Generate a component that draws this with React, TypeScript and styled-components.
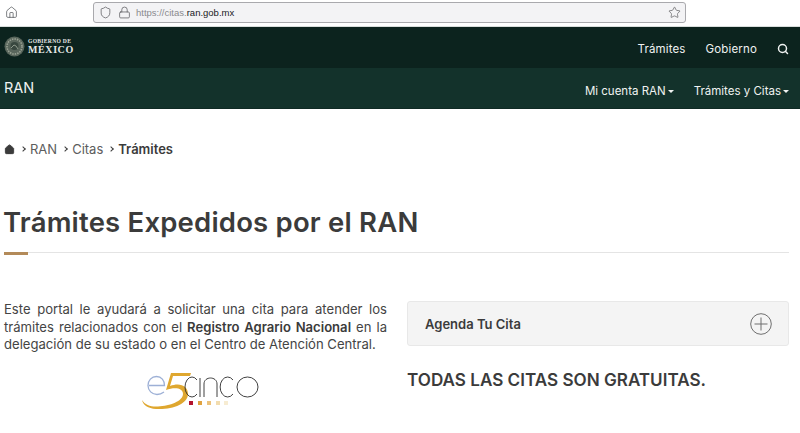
import React from "react";
import styled, { createGlobalStyle } from "styled-components";
import { Home, Search, Shield, Lock, Star } from "lucide-react";

const GlobalStyle = createGlobalStyle`
  html, body {
    margin: 0;
    padding: 0;
    background: #fff;
    overflow: hidden;
  }
  * { box-sizing: border-box; }
  body {
    font-family: Inter, "Open Sans", "Liberation Sans", sans-serif;
    color: #3b3b3b;
  }
`;

const Page = styled.div`
  width: 800px;
  height: 433px;
  overflow: hidden;
`;

const BrowserBar = styled.div`
  height: 27px;
  display: flex;
  align-items: flex-start;
  padding: 2px 0 0 5px;
  background: #fff;
  border-bottom: 1px solid #d9dedc;
`;

const BrowserHome = styled.div`
  width: 88px;
  height: 21px;
  display: flex;
  align-items: center;
  color: #55585c;
`;

const AddressBar = styled.div`
  width: 593px;
  height: 21px;
  display: flex;
  align-items: center;
  padding: 0 4px 0 5px;
  background: #f3f3f5;
  border: 1px solid #a9a9ad;
  border-radius: 3px;
  color: #5c5c60;
`;

const Url = styled.span`
  margin-left: 5px;
  font-family: "Liberation Sans", sans-serif;
  font-size: 9.5px;
  color: #8a8a8e;
  flex: 1;
  b {
    font-weight: 400;
    color: #202024;
  }
`;

const LockWrap = styled.span`
  display: flex;
  margin-left: 6px;
`;

const TopNav = styled.nav`
  height: 41px;
  display: flex;
  align-items: center;
  justify-content: space-between;
  padding: 2px 11px 0 4px;
  background: #0c231e;
`;

const SubNav = styled.nav`
  height: 41px;
  display: flex;
  align-items: center;
  justify-content: space-between;
  padding: 0 11px 0 4px;
  background: #13322b;
  border-bottom: 1px solid #0f2a24;
`;

const Logo = styled.div`
  display: flex;
  align-items: center;
  gap: 3px;
  margin-top: -4px;
`;

const LogoText = styled.div`
  display: flex;
  flex-direction: column;
  font-family: "Liberation Serif", serif;
  font-weight: 700;
  color: #e6e8e6;
  small {
    font-size: 5.6px;
    line-height: 7px;
    letter-spacing: 0.3px;
  }
  strong {
    font-size: 10px;
    line-height: 10px;
    letter-spacing: 0.6px;
  }
`;

const TopLinks = styled.div`
  display: flex;
  align-items: center;
  gap: 20px;
  color: #f0f2f1;
  font-size: 11.5px;
  letter-spacing: 0.15px;
`;

const SubLinks = styled.div`
  display: flex;
  align-items: center;
  gap: 20px;
  margin-top: 5px;
  color: #f0f2f1;
  font-size: 11.5px;
`;

const Caret = styled.span`
  display: inline-block;
  margin-left: 2px;
  vertical-align: 2px;
  border-top: 3px solid #f0f2f1;
  border-left: 3px solid transparent;
  border-right: 3px solid transparent;
`;

const Brand = styled.span`
  color: #f0f2f1;
  font-size: 14.5px;
  margin-top: -1px;
`;

const Content = styled.main`
  padding: 32px 11px 0 4px;
`;

const Crumbs = styled.div`
  height: 16px;
  display: flex;
  align-items: center;
  font-size: 13px;
  color: #5d5d5d;
`;

const Crumb = styled.span<{ $current?: boolean }>`
  display: flex;
  margin-right: 6px;
  font-weight: ${(p) => (p.$current ? 600 : 400)};
  color: ${(p) => (p.$current ? "#3b3b3b" : "#5d5d5d")};
`;

const Chevron = styled.span`
  width: 4px;
  height: 4px;
  margin-right: 5px;
  border-top: 1.3px solid #3b3b3b;
  border-right: 1.3px solid #3b3b3b;
  transform: rotate(45deg);
`;

const Title = styled.h1`
  margin: 48px 0 0 -1px;
  font-size: 27.5px;
  line-height: 34px;
  font-weight: 600;
  letter-spacing: 0.2px;
  color: #3b3b3b;
`;

const Rule = styled.div`
  position: relative;
  margin-top: 13px;
  height: 1px;
  background: #e4e4e4;
  &::before {
    content: "";
    position: absolute;
    left: 0;
    top: 0;
    width: 24px;
    height: 3px;
    background: #b38a59;
  }
`;

const Columns = styled.div`
  display: grid;
  grid-template-columns: 383px 382px;
  gap: 20px;
  margin-top: 47px;
`;

const Intro = styled.p`
  margin: 0;
  padding-top: 1px;
  font-size: 13.1px;
  line-height: 17.5px;
  text-align: justify;
  color: #444;
  b {
    font-weight: 600;
    color: #3b3b3b;
  }
`;

const LogoRow = styled.div`
  display: flex;
  margin: 18px 0 0 138px;
`;

const Accordion = styled.div`
  height: 45px;
  margin-top: 1px;
  display: flex;
  align-items: center;
  justify-content: space-between;
  padding: 0 16px 0 17px;
  background: #f4f4f4;
  border: 1px solid #e8e8e8;
  border-radius: 3px;
  font-size: 13px;
  font-weight: 600;
  color: #3b3b3b;
`;

const Notice = styled.h2`
  margin: 24px 0 0;
  font-size: 17.1px;
  line-height: 20px;
  font-weight: 600;
  color: #3b3b3b;
`;

const Seal = () => (
  <svg width="21" height="21" viewBox="0 0 21 21">
    <circle cx="10.5" cy="10.5" r="10" fill="#59665c" />
    <circle cx="10.5" cy="10.5" r="7.5" fill="none" stroke="#99a294" strokeWidth="1.6" strokeDasharray="1.5 1" />
    <circle cx="10.5" cy="10" r="4" fill="#38473f" />
    <path d="M7 12l3-3 2 1 2 3" fill="none" stroke="#8f9a8c" strokeWidth="1" />
  </svg>
);

const E5Logo = () => (
  <svg width="118" height="40" viewBox="0 0 118 40">
    <path d="M7 13.500h15.500c0-5-3-9-8-9s-8.500 4-8.500 9 4 9 9 9c3 0 5-1 7-2.500" fill="none" stroke="#9db0d6" strokeWidth="1.3" />
    <path d="M29 1h20l-1 3H31l-3 10c10-4 18 0 18 8 0 10-16 16-32 15-8-.5-13-4-14-9 3 5 9 7 16 6.500 12-.5 25-5.500 25-12.500 0-6-8-7-17-4z" fill="#dfa72f" />
    <g fill="none" stroke="#2b2b2b" strokeWidth="0.9">
      <path d="M55 8a7 10 0 1 0 0 14" />
      <path d="M58 6v19" />
      <path d="M62 25V12c0-8 13-8 13 0v13" />
      <path d="M91 8a7.500 10 0 1 0 0 14" />
      <ellipse cx="105.500" cy="15" rx="10.500" ry="10" />
    </g>
    <rect x="47" y="29" width="4" height="4" fill="#b3132e" />
    <rect x="56" y="29" width="4" height="4" fill="#e0a23f" />
    <rect x="65" y="29" width="4" height="4" fill="#ecc27c" />
    <rect x="74" y="29" width="4" height="4" fill="#f2dcae" />
    <rect x="82" y="29" width="4" height="4" fill="#f7ecd2" />
  </svg>
);

const PlusCircle = () => (
  <svg width="22" height="22" viewBox="0 0 22 22" fill="none" stroke="#6f6f6f" strokeWidth="1">
    <circle cx="11" cy="11" r="10.300" />
    <path d="M11 4.500v13M4.500 11h13" />
  </svg>
);

export default function App() {
  return (
    <Page>
      <GlobalStyle />
      <BrowserBar>
        <BrowserHome>
          <Home size={13} strokeWidth={1.4} />
        </BrowserHome>
        <AddressBar>
          <Shield size={13} strokeWidth={1.4} />
          <LockWrap>
            <Lock size={13} strokeWidth={1.4} />
          </LockWrap>
          <Url>
            https://citas.<b>ran.gob.mx</b>
          </Url>
          <Star size={13} strokeWidth={1.3} />
        </AddressBar>
      </BrowserBar>

      <TopNav>
        <Logo>
          <Seal />
          <LogoText>
            <small>GOBIERNO DE</small>
            <strong>MÉXICO</strong>
          </LogoText>
        </Logo>
        <TopLinks>
          <span>Trámites</span>
          <span>Gobierno</span>
          <Search size={12} strokeWidth={3} />
        </TopLinks>
      </TopNav>

      <SubNav>
        <Brand>RAN</Brand>
        <SubLinks>
          <span>
            Mi cuenta RAN
            <Caret />
          </span>
          <span>
            Trámites y Citas
            <Caret />
          </span>
        </SubLinks>
      </SubNav>

      <Content>
        <Crumbs>
          <Crumb>
            <Home size={11} fill="#3b3b3b" color="#3b3b3b" />
          </Crumb>
          <Chevron />
          <Crumb>RAN</Crumb>
          <Chevron />
          <Crumb>Citas</Crumb>
          <Chevron />
          <Crumb $current>Trámites</Crumb>
        </Crumbs>

        <Title>Trámites Expedidos por el RAN</Title>
        <Rule />

        <Columns>
          <div>
            <Intro>
              Este portal le ayudará a solicitar una cita para atender los
              trámites relacionados con el <b>Registro Agrario Nacional</b> en la
              delegación de su estado o en el Centro de Atención Central.
            </Intro>
            <LogoRow>
              <E5Logo />
            </LogoRow>
          </div>
          <div>
            <Accordion>
              Agenda Tu Cita
              <PlusCircle />
            </Accordion>
            <Notice>TODAS LAS CITAS SON GRATUITAS.</Notice>
          </div>
        </Columns>
      </Content>
    </Page>
  );
}
